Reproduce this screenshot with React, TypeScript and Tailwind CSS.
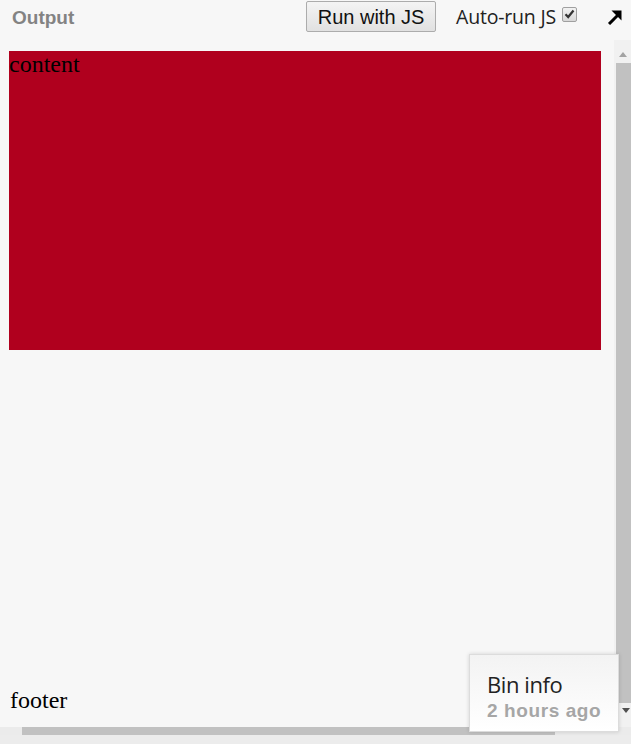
import React from "react";

export default function App() {
  return (
    <div className="relative w-[631px] h-[744px] overflow-hidden bg-[#f7f7f7] flex flex-col">
      {/* header */}
      <div className="h-[40px] flex items-center shrink-0">
        <div className="pl-[12px] text-[19px] font-bold text-[#838383] font-['Liberation_Sans',Arial,sans-serif] -mt-[4px]">
          Output
        </div>
        <button className="ml-auto h-[31px] w-[130px] -mt-[7px] border border-[#acacac] rounded-[2px] bg-gradient-to-b from-[#f4f4f4] to-[#e1e1e1] text-[20px] text-[#111] font-['Liberation_Sans',Arial,sans-serif] leading-none">
          Run with JS
        </button>
        <div className="ml-[20px] -mt-[6px] text-[19.5px] text-[#222] font-['Open_Sans','Noto_Sans',sans-serif] tracking-[-0.2px]">
          Auto-run JS
        </div>
        <div className="ml-[6px] -mt-[12px] w-[15px] h-[15px] border border-[#a0a0a0] rounded-[2px] bg-gradient-to-b from-[#f2f2f2] to-[#d8d8d8] flex items-center justify-center">
          <svg width="11" height="10" viewBox="0 0 11 10">
            <path d="M1.5 5.2 L4.2 8 L9.5 1.5" stroke="#333" strokeWidth="2.2" fill="none" />
          </svg>
        </div>
        <div className="ml-[30px] mr-[8px] -mt-[7px]">
          <svg width="16" height="16" viewBox="0 0 16 16">
            <path d="M2 15 L12 5" stroke="#000" strokeWidth="3" />
            <path d="M4.5 1.5 L14.5 1.5 L14.5 11.5 Z" fill="#000" />
          </svg>
        </div>
      </div>

      {/* iframe area */}
      <div className="flex flex-1 min-h-0">
        <div className="flex-1 flex flex-col pt-[11px] pl-[9px] pr-[13px] font-['Liberation_Serif','Times_New_Roman',serif] text-[24px] text-black">
          <div className="h-[299px] bg-[#b0001e] leading-[26px]">content</div>
          <div className="mt-auto pl-[1px] pb-[14px] leading-[26px]">footer</div>
        </div>
        {/* vertical scrollbar */}
        <div className="w-[17px] bg-[#f1f1f1] flex flex-col items-center">
          <div className="h-[23px] w-full flex items-end justify-center pb-[6px]">
            <div className="w-0 h-0 border-l-[4px] border-r-[4px] border-b-[5px] border-l-transparent border-r-transparent border-b-[#a3a3a3]" />
          </div>
          <div className="flex-1 w-[15px] ml-[2px] bg-[#c1c1c1] mb-[24px]" />
          <div className="h-[0px] relative">
            <div className="absolute -top-[19px] -left-[1px] w-0 h-0 border-l-[4px] border-r-[4px] border-t-[5px] border-l-transparent border-r-transparent border-t-[#505050]" />
          </div>
        </div>
      </div>

      {/* horizontal scrollbar */}
      <div className="h-[8px] flex shrink-0 bg-[#c1c1c1]">
        <div className="w-[22px] bg-[#ebebeb]" />
        <div className="w-[533px] bg-[#c1c1c1]" />
        <div className="flex-1 bg-[#ebebeb]" />
      </div>
      <div className="h-[9px] bg-[#ececec] shrink-0" />

      {/* Bin info */}
      <div className="absolute left-[469px] top-[654px] w-[150px] h-[78px] bg-gradient-to-b from-[#f3f3f3] to-white border border-[#dcdcdc] shadow-[0_0_4px_rgba(0,0,0,0.15)] pl-[17px] pt-[16px]">
        <div className="text-[22px] leading-[26px] text-[#222] font-['Open_Sans','Noto_Sans',sans-serif] tracking-[-0.4px]">
          Bin info
        </div>
        <div className="mt-[4px] text-[19px] leading-[20px] font-bold text-[#a6a6a6] font-['Liberation_Sans',Arial,sans-serif] tracking-[0.6px] whitespace-nowrap">
          2 hours ago
        </div>
      </div>
    </div>
  );
}
